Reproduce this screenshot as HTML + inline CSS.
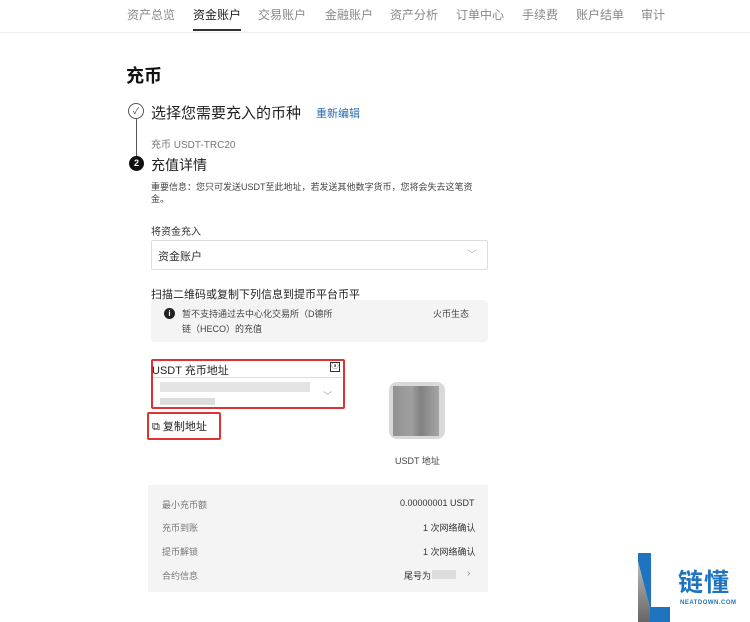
<!DOCTYPE html>
<html><head><meta charset="utf-8"><style>
*{margin:0;padding:0;box-sizing:border-box}
body{width:750px;height:622px;background:#fff;position:relative;overflow:hidden;font-family:"Liberation Sans","Noto Sans CJK SC",sans-serif;color:#222}
.a{position:absolute;white-space:nowrap}
.nav{font-size:12px;color:#888;top:6px}
.g{color:#777}
</style></head><body>
<div class="a" style="left:0;top:32px;width:750px;height:1px;background:#eee"></div>
<div class="a nav" style="left:127px">资产总览</div>
<div class="a nav" style="left:193px;color:#222">资金账户</div>
<div class="a" style="left:193px;top:29px;width:48px;height:2px;background:#333"></div>
<div class="a nav" style="left:258px">交易账户</div>
<div class="a nav" style="left:325px">金融账户</div>
<div class="a nav" style="left:390px">资产分析</div>
<div class="a nav" style="left:456px">订单中心</div>
<div class="a nav" style="left:522px">手续费</div>
<div class="a nav" style="left:576px">账户结单</div>
<div class="a nav" style="left:641px">审计</div>

<div class="a" style="left:126px;top:62px;font-size:18px;font-weight:bold;color:#111">充币</div>

<div class="a" style="left:128px;top:103px;width:16px;height:16px;border:1px solid #555;border-radius:50%;font-size:9px;text-align:center;line-height:14px;color:#444">✓</div>
<div class="a" style="left:136px;top:119px;width:1px;height:37px;background:#555"></div>
<div class="a" style="left:151px;top:102px;font-size:15px;color:#222">选择您需要充入的币种</div>
<div class="a" style="left:316px;top:105px;font-size:11px;color:#2a6cb0">重新编辑</div>
<div class="a g" style="left:151px;top:136px;font-size:10px">充币 USDT-TRC20</div>
<div class="a" style="left:129px;top:156px;width:15px;height:15px;background:#111;border-radius:50%;font-size:9px;text-align:center;line-height:15px;color:#fff;font-weight:bold">2</div>
<div class="a" style="left:151px;top:155px;font-size:14px;color:#222">充值详情</div>
<div class="a" style="left:151px;top:180px;font-size:9px;color:#444">重要信息：您只可发送USDT至此地址，若发送其他数字货币，您将会失去这笔资</div>
<div class="a" style="left:151px;top:192px;font-size:9px;color:#444">金。</div>

<div class="a" style="left:151px;top:223px;font-size:10px;color:#333">将资金充入</div>
<div class="a" style="left:151px;top:240px;width:337px;height:30px;border:1px solid #ddd;border-radius:2px"></div>
<div class="a" style="left:158px;top:248px;font-size:11px;color:#333">资金账户</div>
<div class="a" style="left:467px;top:246px;font-size:10px;color:#aaa">﹀</div>

<div class="a" style="left:151px;top:286px;font-size:11px;color:#222">扫描二维码或复制下列信息到提币平台币平</div>
<div class="a" style="left:151px;top:300px;width:337px;height:42px;background:#f4f4f4;border-radius:4px"></div>
<div class="a" style="left:164px;top:308px;width:11px;height:11px;border-radius:50%;background:#222;color:#fff;font-size:8px;text-align:center;line-height:11px;font-weight:bold">i</div>
<div class="a" style="left:182px;top:307px;font-size:9px;color:#444">暂不支持通过去中心化交易所（D德所</div>
<div class="a" style="left:433px;top:307px;font-size:9px;color:#444">火币生态</div>
<div class="a" style="left:182px;top:322px;font-size:9px;color:#444">链（HECO）的充值</div>

<div class="a" style="left:151px;top:359px;width:194px;height:50px;border:2px solid #d33;border-radius:2px"></div>
<div class="a" style="left:152px;top:362px;font-size:11px;color:#222">USDT 充币地址</div>
<div class="a" style="left:330px;top:362px;width:10px;height:10px;border:1px solid #333;font-size:7px;text-align:center;line-height:8px">ⓐ</div>
<div class="a" style="left:153px;top:377px;width:190px;height:1px;background:#ddd"></div>
<div class="a" style="left:160px;top:382px;width:150px;height:10px;background:#e4e4e4"></div>
<div class="a" style="left:160px;top:398px;width:55px;height:7px;background:#ddd"></div>
<div class="a" style="left:323px;top:389px;font-size:9px;color:#aaa">﹀</div>
<div class="a" style="left:147px;top:412px;width:74px;height:28px;border:2px solid #d33;border-radius:2px"></div>
<div class="a" style="left:152px;top:418px;font-size:11px;color:#222">⧉ 复制地址</div>

<div class="a" style="left:389px;top:382px;width:56px;height:57px;background:#d9d9d9;border-radius:8px"></div>
<div class="a" style="left:393px;top:386px;width:46px;height:50px;background:linear-gradient(90deg,#8a8a8a,#999 40%,#777 60%,#a0a0a0);opacity:.9"></div>
<div class="a" style="left:395px;top:454px;font-size:9px;color:#444">USDT 地址</div>

<div class="a" style="left:148px;top:485px;width:340px;height:107px;background:#f4f4f4"></div>
<div class="a g" style="left:162px;top:498px;font-size:9px">最小充币额</div>
<div class="a" style="left:400px;top:498px;font-size:9px;color:#333">0.00000001 USDT</div>
<div class="a g" style="left:162px;top:521px;font-size:9px">充币到账</div>
<div class="a" style="left:423px;top:521px;font-size:9px;color:#333">1 次网络确认</div>
<div class="a g" style="left:162px;top:545px;font-size:9px">提币解锁</div>
<div class="a" style="left:423px;top:545px;font-size:9px;color:#333">1 次网络确认</div>
<div class="a g" style="left:162px;top:569px;font-size:9px">合约信息</div>
<div class="a" style="left:404px;top:569px;font-size:9px;color:#333">尾号为</div>
<div class="a" style="left:432px;top:570px;width:24px;height:9px;background:#ddd"></div>
<div class="a" style="left:467px;top:568px;font-size:10px;color:#888">›</div>

<svg class="a" style="left:636px;top:553px" width="34" height="69" viewBox="0 0 34 69">
<defs><linearGradient id="lg" x1="0" y1="0" x2="0" y2="1"><stop offset="0" stop-color="#bbb"/><stop offset="1" stop-color="#666"/></linearGradient></defs>
<polygon points="2,0 15,0 15,54 34,54 34,69 2,69" fill="#1e74c0"/>
<polygon points="2,8 14,54 14,69 2,69" fill="url(#lg)"/>
</svg>
<div class="a" style="left:678px;top:563px;font-size:25px;color:#1e74c0;font-weight:bold;letter-spacing:1px">链懂</div>
<div class="a" style="left:680px;top:600px;font-size:6px;color:#1e74c0;font-weight:bold;letter-spacing:.5px">NEATDOWN.COM</div>
</body></html>
